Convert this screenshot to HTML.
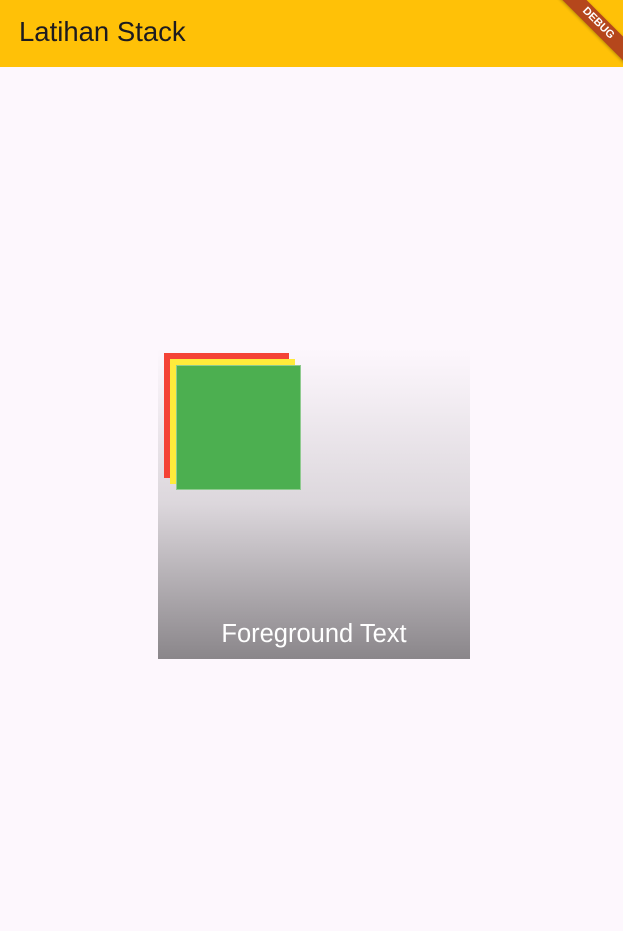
<!DOCTYPE html>
<html><head><meta charset="utf-8"><style>
body{margin:0;width:623px;height:931px;background:#fdf7fd;position:relative;overflow:hidden;font-family:"Liberation Sans",sans-serif}
.bar{position:absolute;left:0;top:0;width:623px;height:67px;background:#ffc107;overflow:hidden}
.title{position:absolute;left:19px;top:16px;font-size:27.5px;color:#1d1b20}
.box{position:absolute;left:158px;top:349px;width:312px;height:310px;background:linear-gradient(#fdf7fd,#dcd7dc 50%,#8a868a)}
.sq{position:absolute;width:125px;height:125px}
.ft{position:absolute;left:158px;width:312px;top:620px;text-align:center;color:#fff;font-size:25.5px}
.ban{position:absolute;left:543px;top:15px;width:110px;height:17px;background:#b5471c;transform:rotate(45deg);color:#fff;font-size:11px;font-weight:bold;text-align:center;line-height:17px;box-shadow:0 1px 3px rgba(0,0,0,.3)}
</style></head><body>
<div class="bar"><div class="title">Latihan Stack</div><div class="ban">DEBUG</div></div>
<div class="box"></div>
<div class="sq" style="left:164px;top:353px;background:#f44336"></div>
<div class="sq" style="left:170px;top:359px;background:#ffeb3b"></div>
<div class="sq" style="left:176px;top:365px;background:#4caf50;box-shadow:0 0 0 1px #8fca8f inset"></div>
<div class="ft">Foreground Text</div>
</body></html>
